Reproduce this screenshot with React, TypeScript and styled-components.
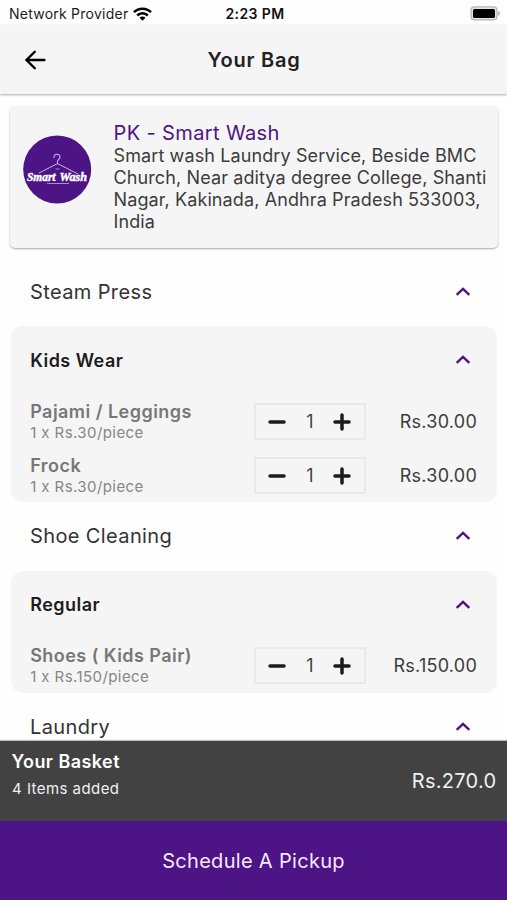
import React from 'react';
import styled, { createGlobalStyle } from 'styled-components';

const PURPLE = '#4c1485';

const GlobalStyle = createGlobalStyle`
  * { box-sizing: border-box; }
  body { margin: 0; background: #fefefe; font-family: Inter, "Liberation Sans", sans-serif; color: #333; }
`;

const Screen = styled.div`
  display: flex;
  flex-direction: column;
  height: 900px;
  overflow: hidden;
  white-space: nowrap;
`;

const StatusBar = styled.div`
  display: grid;
  grid-template-columns: 1fr auto 1fr;
  align-items: center;
  flex: none;
  height: 25px;
  padding: 2px 6px 0 9px;
  font-size: 14px;
  color: #1c1c1c;
`;

const Carrier = styled.div`
  display: flex;
  align-items: center;
  gap: 5px;
  letter-spacing: 0.24px;
`;

const Clock = styled.div`
  font-weight: 600;
  letter-spacing: 0.4px;
  color: #111;
`;

const Battery = styled.svg`
  justify-self: end;
`;

const Header = styled.header`
  display: grid;
  grid-template-columns: 48px 1fr 48px;
  align-items: center;
  flex: none;
  height: 69px;
  padding: 0 12px;
  background: #f5f5f5;
  box-shadow: 0 1px 2px rgba(0, 0, 0, 0.32);
`;

const BackButton = styled.button`
  display: grid;
  place-items: center;
  width: 48px;
  height: 48px;
  padding: 0;
  border: 0;
  background: none;
`;

const Title = styled.h1`
  margin: 0;
  padding-left: 1px;
  text-align: center;
  font-size: 20px;
  font-weight: 600;
  letter-spacing: 0.75px;
  color: #212121;
`;

const Content = styled.main`
  flex: 1;
  min-height: 0;
  overflow: hidden;
  padding-top: 12px;
`;

const StoreCard = styled.section`
  display: flex;
  height: 142px;
  margin: 0 9px 10px 10px;
  padding: 0 0 0 13px;
  border-radius: 5px;
  background: #f5f5f5;
  box-shadow: 0 1px 2px rgba(0, 0, 0, 0.33);
`;

const Logo = styled.svg`
  flex: none;
  margin-top: 29px;
`;

const StoreInfo = styled.div`
  margin-left: 21.5px;
  padding-top: 15px;
`;

const StoreName = styled.h2`
  margin: 0;
  font-size: 20px;
  line-height: 24px;
  font-weight: 400;
  letter-spacing: 0.38px;
  color: ${PURPLE};
`;

const Address = styled.p`
  margin: 0;
  font-size: 18px;
  line-height: 22px;
  letter-spacing: 0.11px;
  color: #3c3c3c;
`;

const SectionHead = styled.div`
  display: flex;
  align-items: center;
  justify-content: space-between;
  height: 68.3px;
  padding: 0 36px 0 30px;
  font-size: 20px;
  letter-spacing: 0.38px;
`;

const Panel = styled.section`
  margin: 0 10px 0 11px;
  border-radius: 12px;
  background: #f5f5f5;
`;

const GroupHead = styled.div`
  display: flex;
  align-items: center;
  justify-content: space-between;
  height: 68px;
  padding: 0 26px 0 19.2px;
  font-size: 18px;
  font-weight: 600;
  letter-spacing: 0.46px;
  color: #1c1c1c;
`;

const ItemRow = styled.div`
  display: grid;
  grid-template-columns: 223.8px 112px 1fr;
  height: 54px;
  padding: 8.8px 20px 0 19.2px;
`;

const ItemName = styled.div`
  margin-top: -2.3px;
  font-size: 18px;
  line-height: 22px;
  font-weight: 600;
  letter-spacing: 0.46px;
  color: #777;
`;

const ItemRate = styled.div`
  font-size: 15px;
  line-height: 19px;
  letter-spacing: 0.42px;
  color: #868686;
`;

const Stepper = styled.div`
  display: flex;
  align-items: center;
  justify-content: space-between;
  height: 37px;
  padding: 0 12.5px;
  border: 2px solid #e9e9e9;
  font-size: 18px;
  color: #444;
`;

const StepButton = styled.button`
  display: flex;
  padding: 0;
  border: 0;
  background: none;
`;

const Price = styled.div`
  line-height: 37px;
  text-align: right;
  font-size: 18px;
  letter-spacing: 0.25px;
  color: #3c3c3c;
`;

const BasketBar = styled.div`
  display: flex;
  justify-content: space-between;
  flex: none;
  height: 80px;
  padding: 0 10.5px 0 11.5px;
  background: #424242;
  box-shadow: 0 -1px 1px rgba(0, 0, 0, 0.25);
  color: #f1f1f1;
`;

const BasketTitle = styled.div`
  padding-top: 10px;
  font-size: 18px;
  line-height: 22px;
  font-weight: 600;
  letter-spacing: 0.44px;
  color: #fff;
`;

const BasketCount = styled.div`
  margin-top: 6px;
  padding-left: 0.6px;
  font-size: 15px;
  line-height: 20px;
  letter-spacing: 0.44px;
`;

const Total = styled.div`
  line-height: 81px;
  font-size: 20px;
  letter-spacing: 0.3px;
`;

const PickupButton = styled.button`
  flex: none;
  height: 79px;
  padding: 0;
  border: 0;
  background: ${PURPLE};
  font: 400 20px Inter, "Liberation Sans", sans-serif;
  letter-spacing: 0.31px;
  color: #fae8ff;
`;

const Chevron = () => (
  <svg width="16" height="12" viewBox="0 0 16 12">
    <path d="M1.700 8.900 8 2.800l6.300 6.100" fill="none" stroke={PURPLE} strokeWidth="2.400" />
  </svg>
);

const StepIcon = ({ plus }: { plus?: boolean }) => (
  <svg width="18" height="18" viewBox="0 0 18 18">
    <path
      d={plus ? 'M2 9h14M9 2v14' : 'M2 9h14'}
      stroke="#1b1b1b"
      strokeWidth="3.500"
      strokeLinecap="round"
    />
  </svg>
);

const StoreLogo = () => (
  <Logo width="69" height="69" viewBox="0 0 69 69">
    <circle cx="34.2" cy="34.5" r="34" fill={PURPLE} />
    <g fill="none" stroke="#cdb5e3" strokeLinecap="round">
      <path d="M31 22.500c-.4-4 5.900-4.300 6-.6.1 2.400-2.500 2.600-2.500 4.700v2" strokeWidth="1.100" />
      <path d="M16 38 34.500 28.600 55 39" strokeWidth="1" />
    </g>
    <path d="M32.500 34h4M24 48.500h22" stroke="#a98bc9" strokeWidth="1" />
    <g
      fill="#fff"
      stroke="#fff"
      strokeWidth=".5"
      fontFamily="'Liberation Serif', serif"
      fontStyle="italic"
      fontWeight="700"
      fontSize="13.500"
    >
      <text x="4" y="45.500" textLength="28.500" lengthAdjust="spacingAndGlyphs">Smart</text>
      <text x="36.500" y="45.500" textLength="27.500" lengthAdjust="spacingAndGlyphs">Wash</text>
    </g>
  </Logo>
);

interface Item {
  name: string;
  rate: string;
  price: string;
}

interface Service {
  title: string;
  group?: string;
  items: Item[];
}

const services: Service[] = [
  {
    title: 'Steam Press',
    group: 'Kids Wear',
    items: [
      { name: 'Pajami / Leggings', rate: '1 x Rs.30/piece', price: 'Rs.30.00' },
      { name: 'Frock', rate: '1 x Rs.30/piece', price: 'Rs.30.00' },
    ],
  },
  {
    title: 'Shoe Cleaning',
    group: 'Regular',
    items: [{ name: 'Shoes ( Kids Pair)', rate: '1 x Rs.150/piece', price: 'Rs.150.00' }],
  },
  { title: 'Laundry', items: [] },
];

export default function App() {
  return (
    <Screen>
      <GlobalStyle />
      <StatusBar>
        <Carrier>
          Network Provider
          <svg width="19" height="14" viewBox="0 0 19 14">
            <g fill="none" stroke="#000" strokeWidth="2.500">
              <path d="M1 5.200c4.700-4.700 12.300-4.700 17 0" />
              <path d="M4.200 8.500c2.900-2.900 7.700-2.900 10.600 0" />
            </g>
            <path d="M9.500 13.700 6.500 10.700c1.700-1.500 4.300-1.500 6 0z" />
          </svg>
        </Carrier>
        <Clock>2:23 PM</Clock>
        <Battery width="31" height="15" viewBox="0 0 31 15">
          <rect x="1" y=".9" width="26" height="13" rx="3.500" fill="#e4e4e4" stroke="#b5b5b5" strokeWidth="1.200" />
          <rect x="3" y="2.900" width="22" height="9" rx="1.500" />
          <path d="M28.200 5c2.200.8 2.200 4 0 4.800z" fill="#aaa" />
        </Battery>
      </StatusBar>
      <Header>
        <BackButton aria-label="Back">
          <svg width="22" height="20" viewBox="0 0 22 20">
            <path
              d="M19.500 10H2M9.800 1.700 1.500 10l8.300 8.300"
              fill="none"
              stroke="#000"
              strokeWidth="2.300"
              strokeLinecap="round"
            />
          </svg>
        </BackButton>
        <Title>Your Bag</Title>
      </Header>
      <Content>
        <StoreCard>
          <StoreLogo />
          <StoreInfo>
            <StoreName>PK - Smart Wash</StoreName>
            <Address>
              Smart wash Laundry Service, Beside BMC
              <br />
              Church, Near aditya degree College, Shanti
              <br />
              Nagar, Kakinada, Andhra Pradesh 533003,
              <br />
              India
            </Address>
          </StoreInfo>
        </StoreCard>
        {services.map((service) => (
          <React.Fragment key={service.title}>
            <SectionHead>
              {service.title}
              <Chevron />
            </SectionHead>
            {service.group && (
              <Panel>
                <GroupHead>
                  {service.group}
                  <Chevron />
                </GroupHead>
                {service.items.map((item) => (
                  <ItemRow key={item.name}>
                    <div>
                      <ItemName>{item.name}</ItemName>
                      <ItemRate>{item.rate}</ItemRate>
                    </div>
                    <Stepper>
                      <StepButton aria-label="Remove one">
                        <StepIcon />
                      </StepButton>
                      1
                      <StepButton aria-label="Add one">
                        <StepIcon plus />
                      </StepButton>
                    </Stepper>
                    <Price>{item.price}</Price>
                  </ItemRow>
                ))}
              </Panel>
            )}
          </React.Fragment>
        ))}
      </Content>
      <BasketBar>
        <div>
          <BasketTitle>Your Basket</BasketTitle>
          <BasketCount>4 Items added</BasketCount>
        </div>
        <Total>Rs.270.0</Total>
      </BasketBar>
      <PickupButton>Schedule A Pickup</PickupButton>
    </Screen>
  );
}
